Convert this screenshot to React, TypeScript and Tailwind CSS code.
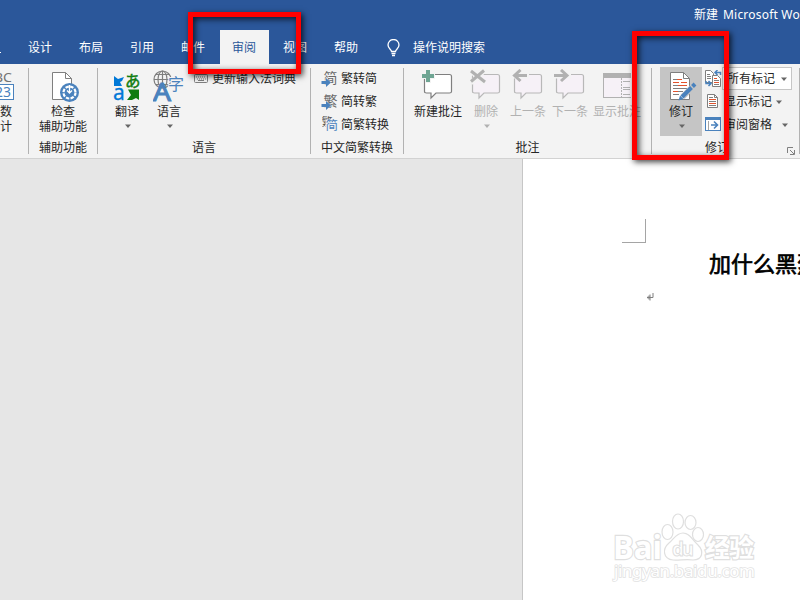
import React from "react";

const tabs = ["设计", "布局", "引用", "邮件", "审阅", "视图", "帮助"];

const Divider = () => <div className="w-px h-[86px] mt-1 bg-[#b2b2b2] shrink-0"></div>;

const Arrow = ({ color = "#666666" }: { color?: string }) => (
  <svg width="6" height="4" viewBox="0 0 6 4" className="shrink-0">
    <path d="M0 .5h6L3 4z" fill={color} />
  </svg>
);

const Group = ({ label, className, children }: any) => (
  <div className={`flex flex-col shrink-0 h-full ${className}`}>
    <div className="flex h-[74px] pt-[3px]">{children}</div>
    <div className="h-5 leading-5 text-center whitespace-nowrap">{label}</div>
  </div>
);

const BigButton = ({ icon, lines, arrow, disabled, className }: any) => (
  <div
    className={`flex flex-col items-center shrink-0 h-[69px] whitespace-nowrap ${className} ${
      disabled ? "text-[#b1b1b1]" : ""
    }`}
  >
    <div className="h-[37px] pt-[2px]">{icon}</div>
    {lines.map((val: string, index: number) => (
      <div className="h-[15px] leading-[15px]" key={index}>
        {val}
      </div>
    ))}
    {arrow && (
      <div className="pt-[5px] pl-[2px]">
        <Arrow color={disabled ? "#b1b1b1" : "#666666"} />
      </div>
    )}
  </div>
);

const CountIcon = () => (
  <svg width="28" height="34" viewBox="0 0 28 34" fontFamily="Noto Sans" className="block">
    <text x="-1" y="12.500" fontSize="13" fill="#737373" textLength="27" lengthAdjust="spacingAndGlyphs">ABC</text>
    <rect x="-1" y="15.500" width="28.500" height="15" fill="#fff" stroke="#4a82bd" />
    <text x="1" y="28" fontSize="14" fill="#4a82bd" textLength="24" lengthAdjust="spacingAndGlyphs">123</text>
  </svg>
);

const AccessIcon = () => (
  <svg width="32" height="34" viewBox="0 0 32 34" fill="none" className="block">
    <path d="M5.500 3.500h13l6 6v21h-19z" fill="#fff" stroke="#7f7f7f" />
    <path d="M18.500 3.500v6h6" stroke="#7f7f7f" />
    <circle cx="22.500" cy="23.500" r="9.500" fill="#4a82bd" />
    <circle cx="22.500" cy="23.500" r="6" stroke="#fff" strokeWidth="2.200" strokeDasharray="3.400 1.300" />
    <path d="M22.500 16v8M20 21.500l2.500 2.500 2.500-2.500" stroke="#fff" strokeWidth="1.300" />
  </svg>
);

const TranslateIcon = () => (
  <svg width="28" height="34" viewBox="0 0 28 34" className="block">
    <path d="M1 7l4 3 6-2-2 4-2 1 2 4H1z" fill="#0078d7" />
    <path d="M15 20.500h11V31l-3-2-4 2h-5l4-5z" fill="#107c10" />
    <text x="12" y="17.500" fontSize="15.500" fontWeight="400" fill="#107c10" stroke="#107c10" strokeWidth=".5" fontFamily="Noto Sans CJK JP">あ</text>
    <text x="0" y="31" fontSize="21" fill="#0078d7" stroke="#0078d7" strokeWidth=".3" fontFamily="Noto Sans">a</text>
  </svg>
);

const LanguageIcon = () => (
  <svg width="32" height="34" viewBox="0 0 32 34" fill="none" className="block">
    <g stroke="#7f7f7f" strokeWidth="1.200">
      <circle cx="9.500" cy="10.500" r="8.500" />
      <ellipse cx="9.500" cy="10.500" rx="4.500" ry="8.500" />
      <path d="M1 10.500h17M2.500 5.500h14M2.500 15.500h14M9.500 2v17" />
    </g>
    <text x="0" y="32" fontSize="25" fontWeight="400" fill="#4a82bd" fontFamily="Noto Sans" textLength="18" lengthAdjust="spacingAndGlyphs" stroke="#4a82bd" strokeWidth="1">A</text>
    <text x="15" y="20.500" fontSize="16" fill="#4a82bd" stroke="#f3f3f3" strokeWidth="2" paintOrder="stroke" fontFamily="Noto Sans CJK SC">字</text>
  </svg>
);

const KeyboardIcon = () => (
  <svg width="16" height="10" viewBox="0 0 16 10" fill="none">
    <rect x="1.500" y=".5" width="13" height="8" rx="1" stroke="#7f7f7f" />
    <path d="M3 3h10M4 5h9" stroke="#7f7f7f" strokeDasharray="1 1" />
    <path d="M5 6.500h6" stroke="#7f7f7f" />
  </svg>
);

const ConvertIcon = ({ text }: { text: string }) => (
  <svg width="16" height="17" viewBox="0 0 16 17" className="overflow-visible">
    <text x="1.500" y="13" fontSize="14" fill="#6a6a6a" fontFamily="Noto Sans CJK SC">{text}</text>
    <path d="M-.5 11h4.500V8L9 12.500 4 17V14H-.5z" fill="#4a82bd" stroke="#f3f3f3" strokeWidth=".8" paintOrder="stroke" />
  </svg>
);

const BothIcon = () => (
  <svg width="16" height="17" viewBox="0 0 16 17">
    <text x="-.5" y="10" fontSize="11" fill="#555555" fontFamily="Noto Sans CJK SC">繁</text>
    <rect x="3.500" y="3.500" width="13" height="14" fill="#f3f3f3" />
    <text x="3.500" y="14" fontSize="12.500" fill="#4a82bd" fontFamily="Noto Sans CJK SC">简</text>
  </svg>
);

const CommentIcon = ({ kind }: { kind: string }) => (
  <svg width="32" height="34" viewBox="0 0 32 34" fill="none" className="block">
    <path
      d="M4.500 5.500h23q2 0 2 2v15q0 1.500-2 1.500H14l-5 5v-5H4.500q-2 0-2-1.500v-15q0-2 2-2z"
      fill={kind === "new" ? "#fff" : "#f6f1f7"}
      stroke={kind === "new" ? "#7f7f7f" : "#b8b8b8"}
      strokeWidth="1.200"
    />
    {kind === "new" && (
      <>
        <path d="M6 0v14M-1 7h14" stroke="#f3f3f3" strokeWidth="6" />
        <path d="M6 1v12M0 7h12" stroke="#6fa593" strokeWidth="4" />
      </>
    )}
    {kind === "delete" && (
      <>
        <path d="M1 2l14 12M15 1L1 14" stroke="#f3f3f3" strokeWidth="5" />
        <path d="M1 2l14 11M14 1.500L1 12.500" stroke="#b1b1b1" strokeWidth="3" />
      </>
    )}
    {kind === "prev" && (
      <>
        <path d="M0 6.500h17" stroke="#f3f3f3" strokeWidth="6" />
        <path d="M3 6.500h12M8.500 1L2.500 6.500l6 5.500" stroke="#b1b1b1" strokeWidth="3" />
      </>
    )}
    {kind === "next" && (
      <>
        <path d="M0 6.500h17" stroke="#f3f3f3" strokeWidth="6" />
        <path d="M0 6.500h12M7 1l6 5.500L7 12" stroke="#b1b1b1" strokeWidth="3" />
      </>
    )}
  </svg>
);

const ShowIcon = () => (
  <svg width="28" height="34" viewBox="0 0 28 34" fill="none" className="block">
    <rect x=".5" y="4.500" width="28" height="24" fill="#f6f1f7" stroke="#b1b1b1" />
    <path d="M0 4h29v5H0z" fill="#b1b1b1" />
    <path d="M18.500 9v20" stroke="#b1b1b1" strokeDasharray="2 1" />
    <path d="M20 12.500h7M20 18.500h7M20 20.500h7M20 25.500h7" stroke="#b1b1b1" />
  </svg>
);

const TrackIcon = () => (
  <svg width="32" height="34" viewBox="0 0 32 34" fill="none" className="block">
    <path d="M5.500 3.500h13l6 6v21h-19z" fill="#fff" stroke="#7f7f7f" />
    <path d="M18.500 3.500v6h6" stroke="#7f7f7f" />
    <path d="M8 10.500h5M8 16.500h5M8 19.500h14M12 22.500h6M8 25.500h6" stroke="#7f7f7f" />
    <path d="M12 10.500h5M8 13.500h6M16 13.500h6M13 16.500h9M8 22.500h5" stroke="#e3532d" />
    <path d="M17.500 28L27 18.500" stroke="#c5c5c5" strokeWidth="6" />
    <path d="M17 28l9.500-9.500M27.500 17.500l2.500-2.500" stroke="#4a82bd" strokeWidth="4" />
    <path d="M13.500 31.500l1.500-5 3.500 3.500z" fill="#4a82bd" />
  </svg>
);

const MarkupIcon = () => (
  <svg width="17" height="17" viewBox="0 0 17 17" fill="none">
    <path d="M.5.500h5l3 3v9h-8z" fill="#fff" stroke="#7f7f7f" />
    <path d="M2 4.500h3M2 6.500h4M2 8.500h4" stroke="#7f7f7f" />
    <path d="M7.500 5.500h5l3 3v8h-8z" fill="#fff" stroke="#7f7f7f" />
    <path d="M9 8.500h3M9 12.500h5" stroke="#e3532d" />
    <path d="M9 10.500h5M9 14.500h5" stroke="#7f7f7f" />
    <path d="M15.500 5V2.500H10M12.500 0L10 2.500 12.500 5M1 11v2.500h5M3.500 11L6 13.500 3.500 16" stroke="#4a82bd" strokeWidth="1.500" />
  </svg>
);

const PageIcon = () => (
  <svg width="17" height="17" viewBox="0 0 17 17" fill="none">
    <path d="M2.500 1.500h7l3 3v10h-10z" fill="#fff" stroke="#7f7f7f" />
    <path d="M9.500 1.500v3h3" stroke="#7f7f7f" />
    <path d="M4 4.500h4M4 8.500h7M4 12.500h7" stroke="#7f7f7f" />
    <path d="M4 6.500h7M4 10.500h7" stroke="#e3532d" />
  </svg>
);

const PaneIcon = () => (
  <svg width="17" height="17" viewBox="0 0 17 17" fill="none">
    <rect x=".5" y="1.500" width="15" height="13" fill="#fff" stroke="#4a82bd" />
    <path d="M0 1h16v3H0z" fill="#4a82bd" />
    <path d="M3.500 5v9" stroke="#a5a5a5" />
    <path d="M6 9h6M9 5.500L12.500 9 9 12.500" stroke="#4a82bd" strokeWidth="1.600" />
  </svg>
);

const Bulb = () => (
  <svg width="14" height="18" viewBox="0 0 14 18" fill="none" stroke="#fff" strokeWidth="1.300">
    <path d="M4.500 12.500c0-2-3.500-3-3.500-6.500a5.500 5.500 0 0 1 11 0c0 3.500-3.500 4.500-3.500 6.500z" />
    <path d="M4.500 14.500h4M5 16.500h3" />
  </svg>
);

const Watermark = () => (
  <svg width="150" height="76" viewBox="0 0 150 76" fill="#fff" stroke="#dfdfdf" strokeWidth="1.200">
    <g fontFamily="Open Sans, Noto Sans CJK SC, sans-serif" fontWeight="700">
      <g strokeWidth="2.400" paintOrder="stroke">
        <text x="3" y="47" fontSize="33" textLength="49" lengthAdjust="spacingAndGlyphs">Bai</text>
        <text x="95" y="45" fontSize="25" textLength="49">经验</text>
      </g>
      <ellipse cx="57.500" cy="20" rx="5.500" ry="7.500" />
      <ellipse cx="68" cy="9.500" rx="5.500" ry="7.500" />
      <ellipse cx="80.500" cy="10.500" rx="5.500" ry="7" />
      <ellipse cx="88" cy="22.500" rx="5.500" ry="7" />
      <path d="M73 21c-7 0-9 6-14 10-7 6-6 16 4 17 6 .5 13-1 20 0 10 0 11-9 5-15-6-5-8-12-15-12z" />
      <text x="62" y="43.500" fontSize="19" strokeWidth="1" textLength="22">du</text>
    </g>
    <text x="4" y="65" fontSize="17" stroke="#e2e2e2" strokeWidth="1.600" paintOrder="stroke" fontFamily="Noto Sans" textLength="141">
      jingyan.baidu.com
    </text>
  </svg>
);

const App = () => {
  return (
    <div className="relative w-[800px] h-[600px] overflow-hidden flex flex-col bg-[#e6e6e6] text-[12px] text-[#262626] font-['Noto_Sans','Noto_Sans_CJK_SC',sans-serif]">
      <div className="h-16 shrink-0 flex flex-col bg-[#2b579a] text-white">
        <div className="flex gap-[5px] h-[30px] leading-[30px] pl-[694px] whitespace-nowrap">
          <span>新建</span>
          <span className="tracking-[0.2px]">Microsoft Word</span>
        </div>
        <div className="flex h-[34px]">
          <div className="w-[15px] flex items-end pb-[11px]">
            <div className="w-px h-px bg-white"></div>
          </div>
          {tabs.map((val, index) => (
            <div
              className={`w-[49px] mx-px pr-px text-center leading-[35px] ${
                val === "审阅" ? "bg-[#f3f3f3] text-[#2b579a]" : ""
              }`}
              key={index}
            >
              {val}
            </div>
          ))}
          <div className="flex items-center gap-3 pl-[15px] pt-px leading-[34px]">
            <Bulb />
            <span>操作说明搜索</span>
          </div>
        </div>
      </div>

      <div className="flex h-[95px] shrink-0 bg-[#f3f3f3] border-b border-[#d2d2d2] whitespace-nowrap">
        <Group label="" className="w-7 overflow-hidden">
          <BigButton className="w-7 -ml-[14px]" icon={<CountIcon />} lines={["字数", "统计"]} />
        </Group>
        <Divider />
        <Group label="辅助功能" className="w-[68px]">
          <BigButton className="w-[68px]" icon={<AccessIcon />} lines={["检查", "辅助功能"]} />
        </Group>
        <Divider />
        <Group label="语言" className="w-[212px]">
          <BigButton className="w-[42px] ml-2" icon={<TranslateIcon />} lines={["翻译"]} arrow />
          <BigButton className="w-[42px]" icon={<LanguageIcon />} lines={["语言"]} arrow />
          <div className="flex items-center h-[23px] gap-[3px] pl-[3px]">
            <KeyboardIcon />
            <span>更新输入法词典</span>
          </div>
        </Group>
        <Divider />
        <Group label="中文简繁转换" className="w-[92px]">
          <div className="flex flex-col pl-[11px]">
            <div className="flex items-center h-[23px] gap-[3px]">
              <ConvertIcon text="简" />
              <span>繁转简</span>
            </div>
            <div className="flex items-center h-[23px] gap-[3px]">
              <ConvertIcon text="繁" />
              <span>简转繁</span>
            </div>
            <div className="flex items-center h-[23px] gap-[3px]">
              <BothIcon />
              <span>简繁转换</span>
            </div>
          </div>
        </Group>
        <Divider />
        <Group label="批注" className="w-[247px]">
          <BigButton className="w-14 ml-[6px]" icon={<CommentIcon kind="new" />} lines={["新建批注"]} />
          <BigButton className="w-10 mr-px" icon={<CommentIcon kind="delete" />} lines={["删除"]} arrow disabled />
          <BigButton className="w-[42px]" icon={<CommentIcon kind="prev" />} lines={["上一条"]} disabled />
          <BigButton className="w-[42px]" icon={<CommentIcon kind="next" />} lines={["下一条"]} disabled />
          <BigButton className="w-[52px]" icon={<ShowIcon />} lines={["显示批注"]} disabled />
        </Group>
        <Divider />
        <Group
          label={
            <div className="flex items-center justify-between pl-[53px] pr-1">
              <span>修订</span>
              <svg width="8" height="8" viewBox="0 0 8 8" fill="none" stroke="#7f7f7f" className="mt-[6px]">
                <path d="M.5 6V.500H6M3 3l4 4M7.500 3v4.500H3" />
              </svg>
            </div>
          }
          className="w-[147px]"
        >
          <BigButton className="w-[42px] ml-2 bg-[#c5c5c5]" icon={<TrackIcon />} lines={["修订"]} arrow />
          <div className="flex flex-col pl-[3px]">
            <div className="flex items-center h-[23px]">
              <MarkupIcon />
              <div className="flex items-center h-[23px] w-[70px] pl-[4px] gap-[6px] bg-white border border-[#c6c6c6]">
                <span>所有标记</span>
                <Arrow />
              </div>
            </div>
            <div className="flex items-center h-[23px]">
              <PageIcon />
              <span className="pl-[2px] pr-1">显示标记</span>
              <Arrow />
            </div>
            <div className="flex items-center h-[23px]">
              <PaneIcon />
              <span className="pl-[2px] pr-[10px]">审阅窗格</span>
              <Arrow />
            </div>
          </div>
        </Group>
        <Divider />
      </div>

      <div className="flex flex-1">
        <div className="w-[522px] shrink-0"></div>
        <div className="w-[278px] bg-white border-l border-[#c6c6c6] overflow-hidden">
          <div className="w-6 h-6 mt-[60px] ml-[99px] border-r border-b border-[#a5a5a5]"></div>
          <h1 className="ml-[186px] mt-[4px] h-8 leading-8 text-[22px] font-normal [-webkit-text-stroke:0.7px_black] text-black whitespace-nowrap">
            加什么黑烈
          </h1>
          <svg width="8" height="8" viewBox="0 0 8 8" fill="none" stroke="#7f7f7f" className="ml-[123px] mt-[14px]">
            <path d="M7 0v4.500H1M4 1.500v6M3 2.500v4M2 3.500v2" />
          </svg>
        </div>
      </div>

      <div className="absolute left-[610px] top-[512px]">
        <Watermark />
      </div>
      <div className="absolute left-[188px] top-3 w-[113px] h-[62px] border-[5px] border-[#ff0000] shadow-[2px_2px_6px_rgba(0,0,0,0.75),inset_2px_2px_6px_rgba(0,0,0,0.75)]"></div>
      <div className="absolute left-[632px] top-[31px] w-[97px] h-[129px] border-[5px] border-[#ff0000] shadow-[2px_2px_6px_rgba(0,0,0,0.75),inset_2px_2px_6px_rgba(0,0,0,0.75)]"></div>
    </div>
  );
};

export default App;
